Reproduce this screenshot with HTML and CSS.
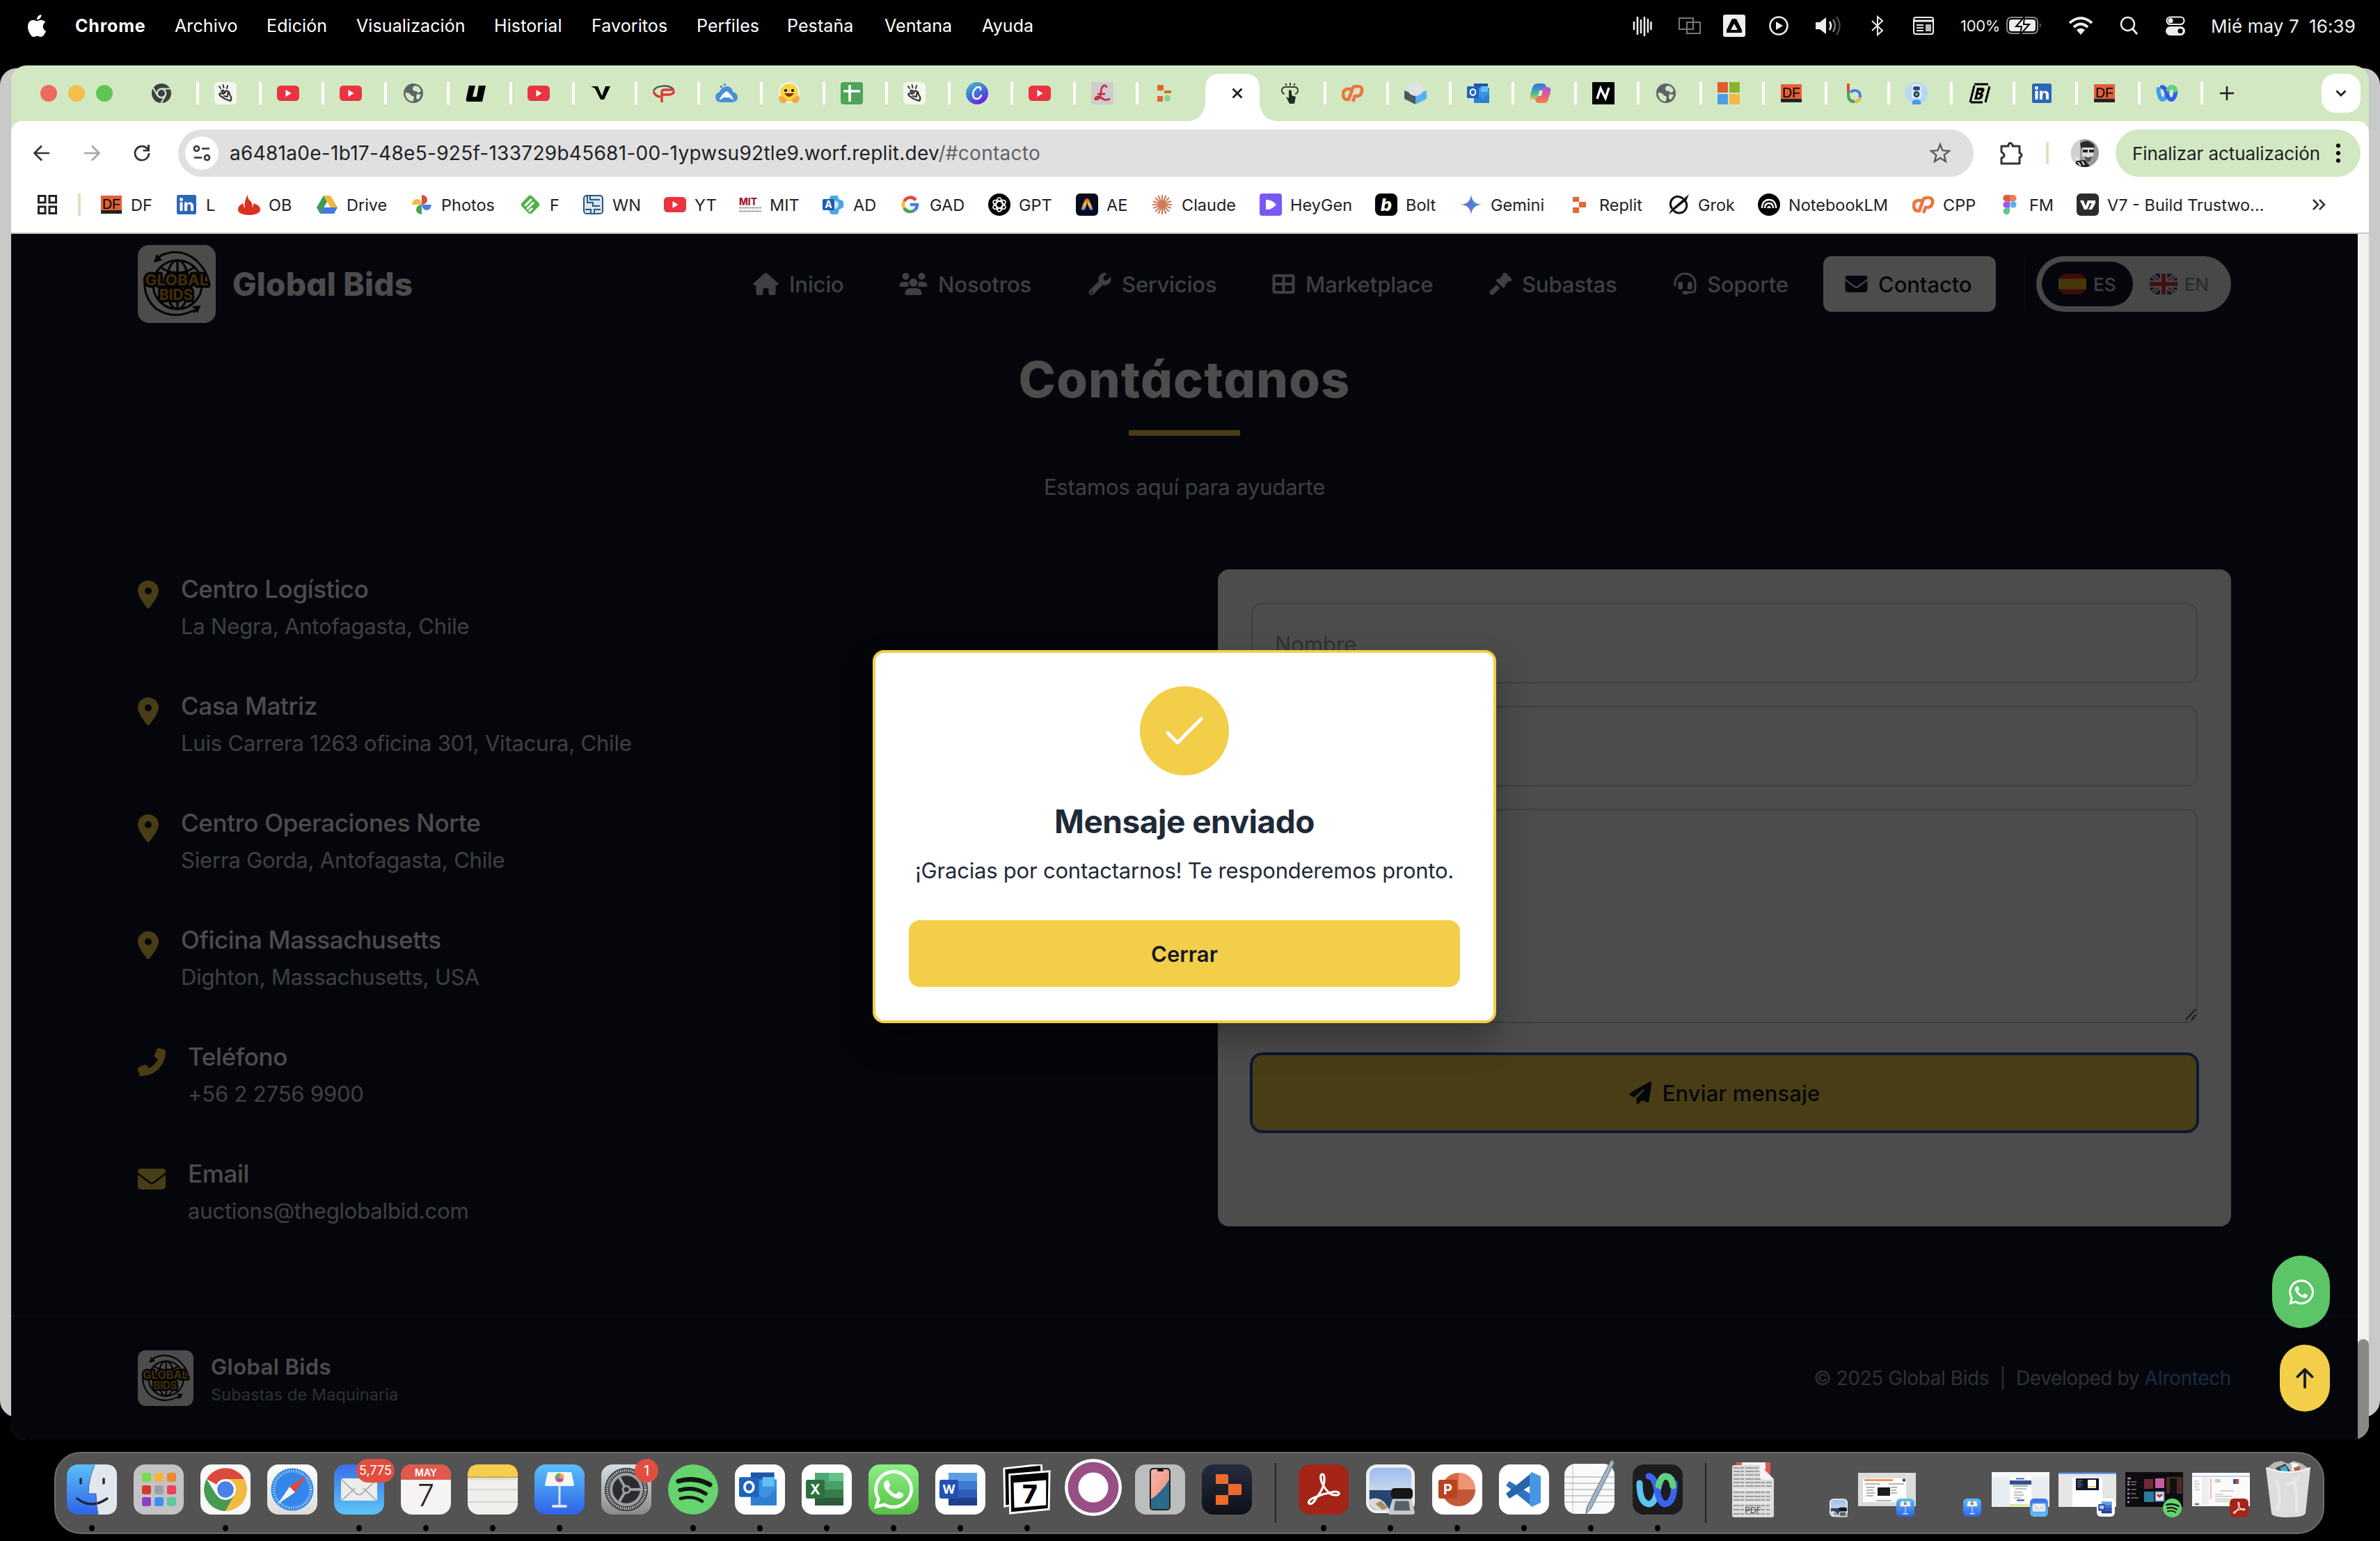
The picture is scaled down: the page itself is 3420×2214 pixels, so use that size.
FILE: index.html
```html
<!DOCTYPE html>
<html lang="es">
<head>
<meta charset="utf-8">
<title>Global Bids</title>
<link rel="stylesheet" href="styles.css">
</head>
<body>
<svg class="sprite" width="0" height="0">
  <defs>
    <linearGradient id="gBlue" x1="0" y1="0" x2="0" y2="1"><stop offset="0" stop-color="#5ac0f8"/><stop offset="1" stop-color="#2f62ea"/></linearGradient>
    <linearGradient id="gMail" x1="0" y1="0" x2="0" y2="1"><stop offset="0" stop-color="#3a6fe8"/><stop offset="1" stop-color="#5cc5f8"/></linearGradient>
    <linearGradient id="gPaper" x1="0" y1="0" x2="0" y2="1"><stop offset="0" stop-color="#ffffff"/><stop offset="1" stop-color="#dcdcd8"/></linearGradient>
    <linearGradient id="gGreen" x1="0" y1="0" x2="0" y2="1"><stop offset="0" stop-color="#8af084"/><stop offset="1" stop-color="#57bf45"/></linearGradient>
    <linearGradient id="gCanva" x1="0" y1="0" x2=".6" y2="1"><stop offset="0" stop-color="#4cc4c8"/><stop offset=".5" stop-color="#3f7ad8"/><stop offset="1" stop-color="#6a25e0"/></linearGradient>
    <linearGradient id="gGear" x1="0" y1="0" x2="0" y2="1"><stop offset="0" stop-color="#d4dfe6"/><stop offset="1" stop-color="#8c8a86"/></linearGradient>
    <linearGradient id="gSky" x1="0" y1="0" x2="0" y2="1"><stop offset="0" stop-color="#9dbcf0"/><stop offset="1" stop-color="#c9d6ee"/></linearGradient>
    <linearGradient id="gNavy" x1="0" y1="0" x2="0" y2="1"><stop offset="0" stop-color="#262c40"/><stop offset="1" stop-color="#0d1018"/></linearGradient>
    <linearGradient id="gGem" x1="0" y1="1" x2="1" y2="0"><stop offset="0" stop-color="#a868b8"/><stop offset=".5" stop-color="#4f7fd6"/><stop offset="1" stop-color="#4a8fe0"/></linearGradient>
    <linearGradient id="gAe" x1="0" y1="0" x2="0" y2="1"><stop offset="0" stop-color="#e84a2a"/><stop offset=".5" stop-color="#f0c040"/><stop offset="1" stop-color="#5a7cf0"/></linearGradient>
    <linearGradient id="gCop1" x1="0" y1="0" x2="0" y2="1"><stop offset="0" stop-color="#2f6fe0"/><stop offset=".6" stop-color="#3fb8a0"/><stop offset="1" stop-color="#e8c840"/></linearGradient>
    <linearGradient id="gCop2" x1="0" y1="0" x2="0" y2="1"><stop offset="0" stop-color="#9a5ae8"/><stop offset=".5" stop-color="#e8588c"/><stop offset="1" stop-color="#f0883c"/></linearGradient>
    <linearGradient id="gPhone" x1="0" y1="0" x2="1" y2="1"><stop offset="0" stop-color="#f4b8a4"/><stop offset="1" stop-color="#e88a80"/></linearGradient>
  </defs>

  <!-- favicons, 32 x 32 -->
  <symbol id="f-chrome" viewBox="0 0 32 32"><circle cx="16" cy="16" r="14" fill="#3c4043"/><circle cx="16" cy="16" r="7.4" fill="#d2e8c2"/><circle cx="16" cy="16" r="5" fill="#3c4043"/><path d="M16 9.500H29M10.400 19.500 4 8M21.500 19.500 15.500 30" stroke="#d2e8c2" stroke-width="2.200"/></symbol>
  <symbol id="f-hand" viewBox="0 0 32 32"><rect width="32" height="32" rx="6" fill="#f4f8f0"/><path d="M10 13q2-3 4 0l1 3q1-5 4-3 3 1 3 5l2 3q1 4-1 6l-8-3-6-4q-3-2-1-4l5 1M11 13l2 4M20 14l-1 5M14 20l5 1" fill="none" stroke="#333" stroke-width="2.200" stroke-linecap="round" stroke-linejoin="round"/><path d="m9 9-2-3M13.500 8l-1-4M18 9l1-4" stroke="#333" stroke-width="2" stroke-linecap="round"/></symbol>
  <symbol id="f-yt" viewBox="0 0 32 32"><rect y="5" width="32" height="22" rx="5.500" fill="#ea3340"/><path d="M12.500 11v10l8-5z" fill="#fff"/></symbol>
  <symbol id="f-globe" viewBox="0 0 32 32"><circle cx="16" cy="16" r="14" fill="#5f6368"/><path d="M19 5q6 1 8 7-2 4-5 3-1-3-4-2-3-1-3-4 0-3 4-4zM4.500 15q5 0 7 2 1 3 4 3 2 1 1 4l-1 4Q5 27 4.500 15zM21 17q4 1 6 0-1 5-4 8-3 0-3-4z" fill="#d2e8c2"/></symbol>
  <symbol id="f-u" viewBox="0 0 32 32"><path d="M6 5h9l-4 16h6l3-16h10l-5 23H4q-3 0-2-5z"/></symbol>
  <symbol id="f-v" viewBox="0 0 32 32"><path d="M1 6h10l6 14 5-14h7l-9 19h-5L7 9z"/></symbol>
  <symbol id="f-p" viewBox="0 0 32 32"><path d="M1 13C4 4 24 3 30 11" fill="none" stroke="#555" stroke-width="2.400"/><path d="M1 14q4 7 10 7M13 29V14q0-3 4-3h14M14 18h9q6 0 8-5" fill="none" stroke="#dd3b30" stroke-width="3.400"/></symbol>
  <symbol id="f-cloud" viewBox="0 0 32 32"><path d="M8 29q-8-1-8-8 0-5 6-7 2-7 10-8 8 0 9 8 7 2 7 8 0 6-8 7z" fill="#4b8fd4"/><path d="M6 26q1-7 10-13 8 5 10 13l-6-4h-8z" fill="#fff"/><g fill="#4b8fd4"><rect x="7" y="5" width="3" height="3"/><rect x="12" y="2" width="3" height="3"/></g></symbol>
  <symbol id="f-hug" viewBox="0 0 32 32"><circle cx="16" cy="15" r="14" fill="#f8d448" stroke="#fff" stroke-width="1.500"/><path d="M2 20q-2 6 3 10 6 1 8-4l-5-5zM30 20q2 6-3 10-6 1-8-4l5-5z" fill="#f5a93c"/><circle cx="11" cy="12" r="2"/><circle cx="21" cy="12" r="2"/><path d="M9 16q7 10 14 0z" fill="#8a2c20"/></symbol>
  <symbol id="f-sheet" viewBox="0 0 32 32"><rect width="32" height="32" rx="4" fill="#4ea35a"/><path d="M13 4v24M4 13h24" stroke="#fff" stroke-width="3.600"/></symbol>
  <symbol id="f-canva" viewBox="0 0 32 32"><circle cx="16" cy="16" r="16" fill="url(#gCanva)"/><path d="M21 11q1-4-3-4-6 1-8 9 0 8 5 8 5 0 7-5" fill="none" stroke="#fff" stroke-width="2.400" stroke-linecap="round"/></symbol>
  <symbol id="f-l" viewBox="0 0 32 32"><rect width="32" height="32" fill="#cdcdcd"/><path d="M22 8q0-4-4-3-4 2-4 11-1 9-7 9-3-1 1-4 5-1 10 4 5 1 9-1M9 17h11" fill="none" stroke="#cc2440" stroke-width="2.600"/></symbol>
  <symbol id="f-replit" viewBox="0 0 32 32"><path d="M6 5h9v7H6zM15 12h10v8H15zM6 20h9v8H6z" fill="#e06a32"/></symbol>
  <symbol id="f-replitdot" viewBox="0 0 32 32"><path d="M5 4h9v8H5zM15 12h10v4H15zM5 20h8v8H5z" fill="#e0682e"/><circle cx="19.500" cy="23" r="4.500" fill="#84d488"/></symbol>
  <symbol id="f-tap" viewBox="0 0 32 32"><path d="M8 17q-4-1-4-5t4-5h15q4 1 4 5t-4 5M16 5V1M11 5 9 2M21 5l2-3" fill="none" stroke="#39453a" stroke-width="2"/><path d="M14 12q3-2 4 1v6l6 2-2 10h-7l-5-10 4 2z" fill="#222d25"/></symbol>
  <symbol id="f-cpp" viewBox="0 0 32 32"><path d="M13 10H8q-6 1-6 7 0 8 6 8h2l6-17q1-2 6-2h2q6 1 5 7-1 6-6 7h-4l-3 8" fill="none" stroke="#ec7440" stroke-width="4.600"/></symbol>
  <symbol id="f-cube" viewBox="0 0 32 32"><path d="M0 12v12l16 8V18z" fill="#4b5a62"/><path d="M32 12v12l-16 8V18z" fill="#59aef0"/><ellipse cx="16" cy="10" rx="11" ry="10" fill="#e2e2e2"/></symbol>
  <symbol id="f-outlook" viewBox="0 0 32 32"><path d="M10 2h20v8H10z" fill="#1e56a4"/><path d="M14 8h18v22H10V12z" fill="#3c92e0"/><path d="M20 6h10v8H20z" fill="#64c0f4"/><path d="M10 30V18l12 6 10-8v14z" fill="#2f7fd0"/><rect y="6" width="17" height="17" rx="1.500" fill="#1d62bc"/><ellipse cx="8.500" cy="14.500" rx="3.800" ry="4.300" fill="none" stroke="#fff" stroke-width="2.200"/></symbol>
  <symbol id="f-copilot" viewBox="0 0 32 32"><path d="M11 2h8q4 0 5 5l1 4h-5q-3 0-4 4l-2 6q-1 4-5 4H6q-7 0-5-7l3-10q2-6 7-6z" fill="url(#gCop1)"/><path d="M21 30h-8q-4 0-5-5l1-2q3 0 4-4l3-8q1-4 4-4h5q7 0 5 7l-3 10q-1 6-6 6z" fill="url(#gCop2)"/><path d="m14 12h5l-2 8h-5z" fill="#d2e8c2"/></symbol>
  <symbol id="f-n" viewBox="0 0 32 32"><rect width="32" height="32"/><path d="M7 24 12 9l7 14 5-15" fill="none" stroke="#fff" stroke-width="3.400"/></symbol>
  <symbol id="f-ms" viewBox="0 0 32 32"><path d="M0 0h15v15H0z" fill="#e25a30"/><path d="M17 0h15v15H17z" fill="#88b433"/><path d="M0 17h15v15H0z" fill="#4aa0e8"/><path d="M17 17h15v15H17z" fill="#f4b942"/></symbol>
  <symbol id="f-df" viewBox="0 0 32 32"><rect x="1" y="3" width="30" height="26" fill="#e4603a"/><rect x="1" y="24" width="30" height="5" fill="#222"/><text x="16" y="21.500" text-anchor="middle" font-family="Liberation Sans" font-size="21" textLength="26" lengthAdjust="spacingAndGlyphs">DF</text></symbol>
  <symbol id="f-b" viewBox="0 0 32 32"><path d="M8 4v16q1 8 9 8t8-9q-1-7-8-7-4 0-6 3" fill="none" stroke="#4a80e8" stroke-width="4"/><path d="M8 2v12" stroke="#e04a3c" stroke-width="4"/><path d="M8 14v6q1 8 9 8" fill="none" stroke="#47a656" stroke-width="4"/><path d="M17 28q6 0 8-6" fill="none" stroke="#f2bb3c" stroke-width="4"/></symbol>
  <symbol id="f-bot" viewBox="0 0 32 32"><circle cx="16" cy="16" r="16" fill="#b8d8f8"/><rect x="9" y="3" width="14" height="11" rx="5" fill="#e8f2fc"/><rect x="11" y="6" width="10" height="6" rx="3" fill="#3c4866"/><path d="M9 14h14l-1 9H10z" fill="#f4f8fc"/><circle cx="16" cy="17.500" r="4.500" fill="#2b3a50"/><circle cx="16" cy="17.500" r="2" fill="#52c0a0"/><path d="M10 32v-5q6-4 12 0v5z" fill="#4a98f0"/></symbol>
  <symbol id="f-bb" viewBox="0 0 32 32"><path d="M9 3h20M3 29 9 5M4 29h17M31 6l-6 23" stroke="#000" stroke-width="3" fill="none"/><path d="M13 8h8q4 1 2 5-1 3-3 3 3 1 1 5-1 4-6 4H9z M16 12l-1 3h3q2-2 0-3zM14 18l-1 4h3q2-2 1-4z" fill-rule="evenodd"/></symbol>
  <symbol id="f-in" viewBox="0 0 32 32"><rect x="2" y="2" width="28" height="28" rx="2.500" fill="#2c66b8"/><path d="M6.500 12.500h4V25h-4zM13 12.500h4v2q4-4 8 0 1 2 1 4V25h-4v-6q0-4-3-4-2 1-2 4v6h-4z" fill="#fff"/><circle cx="8.500" cy="8.500" r="2.400" fill="#fff"/></symbol>
  <symbol id="f-webex" viewBox="0 0 32 32"><g fill="none" stroke-width="6" stroke-linecap="round"><path d="M3.500 10q1 14 6 15 4 0 6.500-9t6.500-9" stroke="#3f9ce8"/><path d="M9 7q4 0 6.500 9t6.500 9q5 0 6.500-12" stroke="#2f5ce8"/><path d="M18 11q2-4 5-4 4 0 5 5" stroke="#5fce86"/></g></symbol>
  <symbol id="f-flame" viewBox="0 0 32 32"><path d="M14 1q-1 6 4 10 4 5 2 9 3-2 2-6 10 3 10 9 0 7-16 8-16-1-16-8 0-6 8-9-1 4 2 7-2-8 4-20z" fill="#dc3020"/></symbol>
  <symbol id="f-drive" viewBox="0 0 32 32"><path d="M11 3h10l10 17H21z" fill="#f2b63a"/><path d="M11 3 1 20l5 9 10-17z" fill="#3f9a54"/><path d="M11 20h20l-5 9H6z" fill="#4478e4"/></symbol>
  <symbol id="f-photos" viewBox="0 0 32 32"><path d="M16 16V2q8 1 8 7t-8 7z" fill="#dd4a3c"/><path d="M16 16h14q-1 8-7 8t-7-8z" fill="#4a7ee8"/><path d="M16 16v14q-8-1-8-7t8-7z" fill="#46a356"/><path d="M16 16H2q1-8 7-8t7 8z" fill="#f2bb3c"/></symbol>
  <symbol id="f-feedly" viewBox="0 0 32 32"><rect x="5.500" y="5.500" width="21" height="21" rx="4" transform="rotate(45 16 16)" fill="#50b04c"/><path d="m9 17 8-8M12 21.500l8-8M15 25l3-3" stroke="#fff" stroke-width="3" stroke-linecap="round"/></symbol>
  <symbol id="f-wn" viewBox="0 0 32 32"><rect x="3" y="3" width="27" height="26" rx="4" fill="#d8e6f2" stroke="#2d567c" stroke-width="2"/><path d="M8 4v9h8v5h10M12 4v5h14M5 23h8v5M18 28v-5h9" fill="none" stroke="#2d567c" stroke-width="2"/></symbol>
  <symbol id="f-mit" viewBox="0 0 32 32"><text x="0" y="17" font-family="Inter" font-weight="800" font-size="14" textLength="26" lengthAdjust="spacingAndGlyphs" fill="#9c2030">MIT</text><path d="M0 20.500h32M0 25.500h32" stroke="#999" stroke-width="2" stroke-dasharray="3 .6"/></symbol>
  <symbol id="f-ad" viewBox="0 0 32 32"><path d="M12 3h10l1 5 7 3v9l-6 3-2 7H12l-3-6-3-8 3-7z" fill="#4aa8e4"/><circle cx="17" cy="16" r="6" fill="#cfe4f4"/><rect y="8" width="17" height="16" rx="2" fill="#1f5cb0"/><text x="8.500" y="21" text-anchor="middle" font-family="Inter" font-weight="700" font-size="14" fill="#fff">A</text></symbol>
  <symbol id="f-g" viewBox="0 0 32 32"><g fill="none" stroke-width="4.600"><path d="M24 9.500A10 10 0 0 0 7.300 11" stroke="#dd4a3c"/><path d="M7.300 11a10 10 0 0 0 0 10" stroke="#f2bb3c"/><path d="M7.300 21A10 10 0 0 0 22 24" stroke="#46a356"/><path d="M22 24q4-3 4-8H16" stroke="#4a7ee8"/></g></symbol>
  <symbol id="f-gpt" viewBox="0 0 32 32"><circle cx="16" cy="16" r="16"/><g fill="none" stroke="#fff" stroke-width="1.700"><ellipse cx="16" cy="16" rx="4.500" ry="10"/><ellipse cx="16" cy="16" rx="4.500" ry="10" transform="rotate(60 16 16)"/><ellipse cx="16" cy="16" rx="4.500" ry="10" transform="rotate(120 16 16)"/></g></symbol>
  <symbol id="f-ae" viewBox="0 0 32 32"><rect width="32" height="32" rx="6" fill="#060c1c"/><path d="M10 24q-3 0-2-3l5-12q1-2 3-2t3 2l5 12q1 3-2 3-2 0-3-3l-3-8-2 8q-1 3-4 3z" fill="url(#gAe)"/></symbol>
  <symbol id="f-claude" viewBox="0 0 32 32"><path d="M16 2v28M2 16h28M6 6l20 20M26 6 6 26M10.500 3l11 26M21.500 3l-11 26M3 11l26 10M3 21l26-10" stroke="#cf7c5c" stroke-width="2.200"/></symbol>
  <symbol id="f-heygen" viewBox="0 0 32 32"><rect width="32" height="32" rx="4" fill="#7858f4"/><path d="M9 9q8-1 15 7-7 8-15 7z" fill="#fff"/></symbol>
  <symbol id="f-bolt" viewBox="0 0 32 32"><rect width="32" height="32" rx="8"/><text x="16" y="25" text-anchor="middle" font-family="Inter" font-style="italic" font-weight="800" font-size="25" fill="#fff">b</text></symbol>
  <symbol id="f-gemini" viewBox="0 0 32 32"><path d="M16 1q1 14 15 15-14 1-15 15-1-14-15-15Q15 15 16 1z" fill="url(#gGem)"/></symbol>
  <symbol id="f-grok" viewBox="0 0 32 32"><path d="M23 8A10.500 10.500 0 0 0 7 22M9 24.500A10.500 10.500 0 0 0 25 10" fill="none" stroke="#111" stroke-width="3"/><path d="M31 1q-3 7-3 8L2 30q3-7 7-10z" fill="#111"/></symbol>
  <symbol id="f-nlm" viewBox="0 0 32 32"><circle cx="16" cy="16" r="16"/><g fill="none" stroke="#fff" stroke-width="2.400"><path d="M6 21v-3q2-9 10-9t10 9v3M10 21q0-7 6-7t6 7M14 21q2-4 4 0"/></g></symbol>
  <symbol id="f-fm" viewBox="0 0 32 32"><path d="M16 2h-5a4.700 4.700 0 0 0 0 9.400h5z" fill="#e25a38"/><path d="M16 2h5a4.700 4.700 0 0 1 0 9.400h-5z" fill="#ee7a66"/><path d="M16 11.400h-5a4.700 4.700 0 0 0 0 9.400h5z" fill="#9a58f0"/><circle cx="21" cy="16" r="4.700" fill="#56b4f0"/><path d="M16 20.800h-5a4.700 4.700 0 1 0 5 5z" fill="#5cc88a"/></symbol>
  <symbol id="f-v7" viewBox="0 0 32 32"><rect width="32" height="32" rx="6" fill="#2c2c2e"/><path d="M5 10h5l3 8 3-8h11v4l-5 9h-5l5-9h-3l-4 9h-4z" fill="#fff"/></symbol>

  <!-- dock icons, 72 x 72 -->
  <symbol id="d-finder" viewBox="0 0 72 72"><rect width="72" height="72" rx="16" fill="url(#gBlue)"/><path d="M40 0h16q16 0 16 16v40q0 16-16 16H45q-3-14-3-30H31q0-24 9-42z" fill="#e2e6ef"/><path d="M20 21v6M53 21v6M15 49q20 16 43 0" fill="none" stroke="#1c2836" stroke-width="3.400" stroke-linecap="round"/><path d="M40 1q-9 20-9 41h11q0 16 3 30" fill="none" stroke="#38618e" stroke-width="1"/></symbol>
  <symbol id="d-launch" viewBox="0 0 72 72"><rect width="72" height="72" rx="16" fill="#c3c3c5"/><g><rect x="12" y="12" width="13" height="13" rx="3" fill="#76dc50"/><rect x="30" y="12" width="13" height="13" rx="3" fill="#f4b73c"/><rect x="48" y="12" width="13" height="13" rx="3" fill="#ec8a30"/><rect x="12" y="30" width="13" height="13" rx="3" fill="#d8382c"/><rect x="30" y="30" width="13" height="13" rx="3" fill="#9aa2a6"/><rect x="48" y="30" width="13" height="13" rx="3" fill="#ee4258"/><rect x="12" y="47" width="13" height="13" rx="3" fill="#9040c8"/><rect x="30" y="47" width="13" height="13" rx="3" fill="#3f90f4"/><rect x="48" y="47" width="13" height="13" rx="3" fill="#5cc89c"/></g></symbol>
  <symbol id="d-chrome" viewBox="0 0 72 72"><rect width="72" height="72" rx="16" fill="#f8f8f8"/><path d="M36 36 9 21a31 31 0 0 1 54 0H36z" fill="#dc4a3c"/><path d="M36 36 22.500 43.500 9 21a31 31 0 0 0 27 46l13-23z" fill="#459c50"/><path d="M36 36V21h27a31 31 0 0 1-27 46l13-23z" fill="#f2bb40"/><circle cx="36" cy="36" r="15" fill="#fff"/><circle cx="36" cy="36" r="11.800" fill="#4a80e8"/></symbol>
  <symbol id="d-safari" viewBox="0 0 72 72"><rect width="72" height="72" rx="16" fill="url(#gPaper)"/><circle cx="36" cy="36" r="30.500" fill="#3487ea"/><circle cx="36" cy="36" r="26.500" fill="none" stroke="#dcecfc" stroke-width="4" stroke-dasharray="1 2.500"/><path d="m57 15-17 25-8-8z" fill="#e04a3a"/><path d="m15 57 17-25 8 8z" fill="#f4f4f4"/></symbol>
  <symbol id="d-mail" viewBox="0 0 72 72"><rect width="72" height="72" rx="16" fill="url(#gMail)"/><rect x="10" y="20" width="52" height="32" rx="3.500" fill="#ececec"/><path d="m11 22 21 20q4 3 8 0l21-20M12 51l18-17M60 51 42 34" fill="none" stroke="#a2a2a2" stroke-width="1.600"/></symbol>
  <symbol id="d-cal" viewBox="0 0 72 72"><rect width="72" height="72" rx="16" fill="#f5f4f2"/><path d="M0 22v-6Q0 0 16 0h40q16 0 16 16v6z" fill="#e0594e"/><text x="36" y="17" text-anchor="middle" font-family="Inter" font-weight="600" font-size="14" fill="#fff">MAY</text><text x="36" y="60" text-anchor="middle" font-family="Inter" font-weight="300" font-size="43" fill="#222">7</text></symbol>
  <symbol id="d-notes" viewBox="0 0 72 72"><rect width="72" height="72" rx="16" fill="#f0efec"/><path d="M0 18v-2Q0 0 16 0h40q16 0 16 16v2z" fill="#f6cd4c"/><path d="M0 18.500h72" stroke="#a89860" stroke-width="1.500"/><path d="M2 21.500h68" stroke="#aaa" stroke-width="1.400" stroke-dasharray="1 2"/><path d="M0 36h72M0 54h72" stroke="#cbcbcb" stroke-width="1.600"/></symbol>
  <symbol id="d-key" viewBox="0 0 72 72"><rect width="72" height="72" rx="16" fill="url(#gBlue)"/><path d="M19 11h34l4 18q0 2-3 2H18q-3 0-3-2z" fill="#f6f6f6"/><circle cx="36" cy="19" r="6.500" fill="#e8a33c"/><path d="M36 19v-6.500a6.500 6.500 0 0 0-6 8z" fill="#55b85a"/><path d="M36 19l6 3a6.500 6.500 0 0 1-12-1z" fill="#c24cb8"/><path d="M36 31v28" stroke="#dfe4ec" stroke-width="3"/><rect x="25" y="58" width="22" height="4" rx="2" fill="#dfe4ec"/></symbol>
  <symbol id="d-gear" viewBox="0 0 72 72"><rect width="72" height="72" rx="16" fill="url(#gGear)"/><circle cx="36" cy="36" r="31" fill="#2b2c2e"/><circle cx="36" cy="36" r="27.500" fill="none" stroke="#b6babd" stroke-width="4" stroke-dasharray="1.800 1.200"/><circle cx="36" cy="36" r="22" fill="none" stroke="#9c9fa2" stroke-width="4.500"/><path d="M36 36h22M36 36 25 17M36 36 25 55" stroke="#9c9fa2" stroke-width="4"/><circle cx="36" cy="36" r="5" fill="#2b2c2e" stroke="#9c9fa2" stroke-width="3"/></symbol>
  <symbol id="d-spotify" viewBox="0 0 72 72"><circle cx="36" cy="36" r="36" fill="#66d46e"/><g fill="none" stroke="#10180f" stroke-linecap="round"><path d="M15 24q24-7 45 5" stroke-width="7"/><path d="M17 37q20-6 37 5" stroke-width="5.600"/><path d="M18 49q17-5 31 4" stroke-width="4.600"/></g></symbol>
  <symbol id="d-outlook" viewBox="0 0 72 72"><rect width="72" height="72" rx="16" fill="#fff"/><use href="#f-outlook" x="6" y="8" width="54" height="54"/></symbol>
  <symbol id="d-excel" viewBox="0 0 72 72"><rect width="72" height="72" rx="16" fill="#fff"/><path d="M19 12h41v12H19z" fill="#4fa873"/><path d="M39 12h21v12H39z" fill="#66c28c"/><path d="M19 24h41v12H19z" fill="#47a068"/><path d="M19 36h41v12H19z" fill="#367c49"/><path d="M19 48h41v11H19z" fill="#2c5c3a"/><rect x="6" y="22" width="27" height="27" rx="3" fill="#2c703f"/><text x="19.500" y="43" text-anchor="middle" font-family="Inter" font-weight="700" font-size="20" fill="#fff">X</text></symbol>
  <symbol id="i-wa" viewBox="0 0 448 512"><path d="M380.900 97.100C339 55.100 283.200 32 223.900 32c-122.400 0-222 99.600-222 222 0 39.100 10.200 77.300 29.600 111L0 480l117.700-30.900c32.400 17.700 68.900 27 106.100 27h.1c122.300 0 224.100-99.600 224.100-222 0-59.300-25.200-115-67.100-157zm-157 341.600c-33.200 0-65.700-8.900-94-25.700l-6.700-4-69.800 18.300L72 359.200l-4.400-7c-18.500-29.400-28.200-63.300-28.200-98.200 0-101.700 82.800-184.500 184.600-184.500 49.300 0 95.600 19.200 130.400 54.100 34.800 34.900 56.200 81.200 56.100 130.500 0 101.800-84.900 184.600-186.600 184.600zm101.200-138.200c-5.500-2.800-32.800-16.200-37.900-18-5.100-1.900-8.800-2.800-12.500 2.800-3.700 5.600-14.300 18-17.600 21.800-3.200 3.700-6.500 4.200-12 1.400-32.600-16.300-54-29.100-75.500-66-5.700-9.800 5.700-9.100 16.300-30.300 1.800-3.700.9-6.900-.5-9.700-1.400-2.800-12.500-30.100-17.100-41.200-4.500-10.800-9.100-9.300-12.500-9.500-3.200-.2-6.900-.2-10.600-.2-3.700 0-9.700 1.400-14.800 6.900-5.100 5.600-19.400 19-19.400 46.300 0 27.300 19.900 53.700 22.600 57.400 2.800 3.700 39.100 59.700 94.800 83.800 35.200 15.200 49 16.500 66.600 13.900 10.700-1.600 32.800-13.400 37.400-26.400 4.600-13 4.600-24.100 3.200-26.400-1.300-2.500-5-3.900-10.500-6.600z" fill="#fff"/></symbol>
  <symbol id="d-wa" viewBox="0 0 72 72"><rect width="72" height="72" rx="16" fill="url(#gGreen)"/><use href="#i-wa" x="8" y="4" width="56" height="64"/></symbol>
  <symbol id="d-word" viewBox="0 0 72 72"><rect width="72" height="72" rx="16" fill="#fff"/><path d="M19 12h41v12H19z" fill="#5ba0e6"/><path d="M19 24h41v12H19z" fill="#4079d0"/><path d="M19 36h41v12H19z" fill="#2d5cb8"/><path d="M19 48h41v11H19z" fill="#1f3f8c"/><rect x="6" y="22" width="27" height="27" rx="3" fill="#2450b0"/><text x="19.500" y="42" text-anchor="middle" font-family="Inter" font-weight="700" font-size="18" fill="#fff">W</text></symbol>
  <symbol id="d-seven" viewBox="0 0 72 74"><path d="M3 6 58 0l2 50L4 62z" fill="#000" stroke="#fff" stroke-width="3"/><path d="M11 15 70 10l-1 56-57 6z" fill="#000" stroke="#fff" stroke-width="3"/><path d="m17 27 48-4v37l-47 4z" fill="#fff"/><text x="41" y="58" text-anchor="middle" font-family="Inter" font-weight="800" font-size="38">7</text></symbol>
  <symbol id="d-ring" viewBox="0 0 82 82"><circle cx="41" cy="41" r="41" fill="#fff"/><circle cx="41" cy="41" r="29" fill="none" stroke="#984f86" stroke-width="15"/></symbol>
  <symbol id="d-phone" viewBox="0 0 72 72"><rect width="72" height="72" rx="16" fill="#bcbdbd"/><rect x="21" y="5" width="30" height="61" rx="5" fill="#222"/><rect x="23" y="7" width="26" height="57" rx="4" fill="url(#gPhone)"/><path d="M23 50Q38 40 49 22v38q0 4-4 4H27q-4 0-4-4z" fill="#2b6a8a"/><rect x="32" y="7" width="9" height="3" rx="1.500"/></symbol>
  <symbol id="d-replit" viewBox="0 0 72 72"><rect width="72" height="72" rx="16" fill="url(#gNavy)"/><path d="M20 14h16q2 0 2 2v12H20zM38 28h17q2 0 2 2v12q0 2-2 2H38zM20 44h18v12q0 2-2 2H20z" fill="#ee6a2c"/></symbol>
  <symbol id="d-acro" viewBox="0 0 72 72"><rect width="72" height="72" rx="16" fill="#a42418"/><path d="M15 56q-3-5 12-10 11-14 10-26 0-6-3-6-4 1-1 11 5 12 14 18 12 3 11-2-3-4-14 0-13 2-18 6-6 12-11 9z" fill="none" stroke="#fff" stroke-width="3.200" stroke-linejoin="round"/></symbol>
  <symbol id="d-preview" viewBox="0 0 72 74"><rect width="72" height="72" rx="16" fill="#efefef"/><path d="M5 39V17Q5 5 17 5h38q12 0 12 12v22z" fill="url(#gSky)"/><path d="M5 38h62v17q0 12-12 12H17Q5 67 5 55z" fill="#28456e"/><path d="M5 52q12-6 22 4l8 11H17Q5 66 5 55z" fill="#d8dcdc"/><path d="M14 58l8-4 10 10-8 3z" fill="#a88a5c"/><rect x="37" y="35" width="32" height="16" rx="5" fill="#161616"/><path d="M39 51h28l5 20q0 3-4 3H36q-4 0-3-3z" fill="#c5cbd0"/><path d="M43 54h20l2 14H41z" fill="#5a6068"/></symbol>
  <symbol id="d-ppt" viewBox="0 0 72 72"><rect width="72" height="72" rx="16" fill="#fff"/><circle cx="38" cy="36" r="24" fill="#d96a48"/><path d="M38 12a24 24 0 0 1 24 24H38z" fill="#ee9474"/><path d="M62 36a24 24 0 0 1-48 0z" fill="#c2583a"/><rect x="9" y="22" width="27" height="27" rx="3" fill="#b8431f"/><text x="22.500" y="43" text-anchor="middle" font-family="Inter" font-weight="700" font-size="20" fill="#fff">P</text></symbol>
  <symbol id="d-code" viewBox="0 0 72 72"><rect width="72" height="72" rx="16" fill="#fff"/><path d="M47 60 10 30l5-6 40 24z" fill="#2f74c4"/><path d="M47 12 10 42l5 7 40-25z" fill="#2565ac"/><path d="m47 11 13 6v38l-13 6-3-3V14z" fill="#4597e4"/></symbol>
  <symbol id="d-text" viewBox="0 0 76 80"><rect y="7" width="72" height="72" rx="16" fill="#fafafa"/><path d="M0 26h72M0 35h72M0 44h72M0 53h72M0 62h72" stroke="#bdbdbd" stroke-width="1.400"/><path d="M12 8v70" stroke="#eaa" stroke-width="1"/><path d="M67 2q5 0 4 5L38 72l-7 7 1-9z" fill="#9fb4c6" stroke="#5c6b78" stroke-width="1"/></symbol>
  <symbol id="d-webex" viewBox="0 0 72 72"><rect width="72" height="72" rx="16" fill="#1c1c1e"/><path d="M10 27q0 28 13 30 9 0 13-20t11-20q8 0 10 8" fill="none" stroke="#5cc4f0" stroke-width="9" stroke-linecap="round"/><path d="M23 17q8 0 12 20t12 20q13-2 13-30" fill="none" stroke="#3c62f0" stroke-width="9" stroke-linecap="round"/><path d="M37 30q4-13 10-13 9 0 11 14" fill="none" stroke="#5fd07c" stroke-width="9" stroke-linecap="round"/></symbol>
  <symbol id="d-pdf" viewBox="0 0 62 80"><path d="M6 0h49v22H6z" fill="#d95a4e"/><path d="M14 0h34v10H14z" fill="#f4f4f4"/><path d="M3 4h37l20 20v52q0 3-3 3H3q-3 0-3-3V7q0-3 3-3z" fill="#dcdcdc"/><path d="M2 8h36M2 13h37M2 18h38M2 24h55M2 29h55M2 34h55M2 43h52M2 49h52M2 54h52M2 62h52M2 68h52M2 74h52" stroke="#9c9c9c" stroke-width="1.800" stroke-dasharray="9 1 5 2 12 1"/><path d="M2 39h56M2 58h56" stroke="#eee" stroke-width="2"/><path d="M40 4v17q0 4 4 4h16z" fill="#f3f3f3"/><text x="30" y="73" text-anchor="middle" font-family="Inter" font-size="12" fill="#444">PDF</text></symbol>
  <symbol id="d-trash" viewBox="0 0 64 84"><path d="M2 12 12 4l10-2 10 4 8-4 12 4 10 7-6 12H6z" fill="#b9b9b9"/><path d="m14 12 14-6 8 12H18z" fill="#444"/><path d="m36 4 10 2 6 10H38z" fill="#f6f6f6"/><path d="m20 12 9-3 3 8h-9z" fill="#38b0d8"/><path d="m40 12 8-3 3 7-9 3z" fill="#b4603c"/><path d="M0 12q32 12 64 0l-7 65q-2 6-25 6T8 77z" fill="#dedddb"/><path d="M0 12q32 12 64 0" fill="none" stroke="#f8f8f8" stroke-width="2"/><path d="M14 30q10 20 2 44M40 26q6 24 4 50M28 36q16-2 20-12" fill="none" stroke="#e8e8e6" stroke-width="4"/></symbol>

  <!-- site icons -->
  <symbol id="i-pin" viewBox="0 0 384 512"><path d="M215.700 499.200C267 435 384 279.400 384 192C384 86 298 0 192 0S0 86 0 192c0 87.400 117 243 168.300 307.200c12.300 15.300 35.100 15.300 47.400 0zM192 128a64 64 0 1 1 0 128 64 64 0 1 1 0-128z"/></symbol>
  <symbol id="i-tel" viewBox="0 0 512 512"><path transform="matrix(-1 0 0 1 512 0)" d="M164.900 24.600c-7.700-18.600-28-28.500-47.400-23.200l-88 24C12.100 30.200 0 46 0 64C0 311.400 200.600 512 448 512c18 0 33.800-12.100 38.600-29.500l24-88c5.300-19.400-4.600-39.700-23.200-47.400l-96-40c-16.300-6.800-35.200-2.100-46.300 11.600L304.700 368C234.300 334.700 177.300 277.700 144 207.300L193.300 167c13.700-11.200 18.400-30 11.600-46.300l-40-96z"/></symbol>
  <symbol id="i-env" viewBox="0 0 512 512"><path d="M48 64C21.500 64 0 85.500 0 112c0 15.100 7.100 29.300 19.200 38.400L236.800 313.600c11.400 8.500 27 8.500 38.400 0L492.800 150.400c12.100-9.100 19.200-23.300 19.200-38.400c0-26.500-21.500-48-48-48L48 64zM0 176L0 384c0 35.300 28.700 64 64 64l384 0c35.300 0 64-28.700 64-64l0-208L294.400 339.200c-22.800 17.100-54 17.100-76.800 0L0 176z"/></symbol>
  <symbol id="i-plane" viewBox="0 0 512 512"><path d="M498.100 5.600c10.100 7 15.400 19.100 13.500 31.200l-64 416c-1.500 9.700-7.400 18.200-16 23s-18.900 5.400-28 1.600L284 427.700l-68.500 74.100c-8.900 9.700-22.900 12.900-35.200 8.100S160 493.200 160 480V396.400c0-4 1.500-7.800 4.200-10.700L331.800 202.800c5.800-6.300 5.600-16-.4-22s-15.700-6.400-22-.7L106 360.800 17.700 316.600C7.100 311.300 .3 300.700 0 288.900s5.900-22.800 16.100-28.700l448-256c10.700-6.100 23.900-5.500 34 1.400z"/></symbol>
  <symbol id="i-home" viewBox="0 0 576 512"><path d="M575.800 255.500c0 18-15 32.100-32 32.100l-32 0 .7 160.200V472c0 22.100-17.900 40-40 40H392c-22.100 0-40-17.900-40-40V384c0-17.700-14.300-32-32-32H256c-17.700 0-32 14.300-32 32v88c0 22.100-17.900 40-40 40H104c-22.100 0-40-17.900-40-40V287.600H32c-18 0-32-14-32-32.100c0-9 3-17 10-24L266.400 8c7-7 15-8 22-8s15 2 21 7L564.800 231.500c8 7 12 15 11 24z"/></symbol>
  <symbol id="i-users" viewBox="0 0 40 32"><circle cx="9" cy="5" r="5"/><circle cx="32" cy="5" r="5"/><circle cx="20" cy="14" r="6"/><path d="M0 19q0-6 6-6h5q2 0 2 1-1 4 1 6H1q-1 0-1-1zM40 19q0-6-6-6h-5q-2 0-2 1 1 4-1 6h13q1 0 1-1zM8 30q0-8 8-8h8q8 0 8 8 0 2-2 2H10q-2 0-2-2z"/></symbol>
  <symbol id="i-wrench" viewBox="0 0 512 512"><path d="M507.730 109.100c-2.240-9.030-13.540-12.090-20.120-5.510l-74.360 74.360-67.880-11.310-11.310-67.880 74.360-74.360c6.620-6.620 3.430-17.900-5.660-20.160-47.380-11.740-99.550.91-136.580 37.930-39.640 39.640-50.550 97.100-34.050 147.200L18.740 402.760c-24.990 24.990-24.990 65.510 0 90.500 24.990 24.990 65.510 24.990 90.500 0l213.210-213.210c50.120 16.710 107.470 5.680 147.370-34.220 37.070-37.070 49.700-89.320 37.910-136.730zM64 472c-13.250 0-24-10.750-24-24 0-13.260 10.750-24 24-24s24 10.740 24 24c0 13.250-10.750 24-24 24z"/></symbol>
  <symbol id="i-table" viewBox="0 0 32 32"><path fill-rule="evenodd" d="M4 2h24q4 0 4 4v20q0 4-4 4H4q-4 0-4-4V6q0-4 4-4zM4 6v8h10V6zM18 6v8h10V6zM4 18v8h10v-8zM18 18v8h10v-8z"/></symbol>
  <symbol id="i-gavel" viewBox="0 0 32 32"><g transform="rotate(45 16 16)"><rect x="8" y="-1" width="16" height="5" rx="2.500"/><rect x="10" y="3" width="12" height="10"/><rect x="8" y="12" width="16" height="5" rx="2.500"/></g><path d="m11 17 5 5L6.500 31q-2 1.500-4 0l-1-1q-1.500-2 0-4z"/></symbol>
  <symbol id="i-headset" viewBox="0 0 32 32"><path d="M1.500 19v-4a14.500 14 0 0 1 29 0v8q0 5-5 5h-7" fill="none" stroke="currentColor" stroke-width="3"/><rect x="6" y="13" width="6.500" height="11" rx="2.500"/><rect x="19.500" y="13" width="6.500" height="11" rx="2.500"/><rect x="12" y="26" width="9" height="5" rx="2.500"/></symbol>
  <symbol id="i-es" viewBox="0 0 40 30"><rect width="40" height="30" rx="12" fill="#c32d2a"/><path d="M0 7.500h40v15H0z" fill="#f0b92c"/></symbol>
  <symbol id="i-en" viewBox="0 0 40 30"><clipPath id="cEn"><rect width="40" height="30" rx="12"/></clipPath><g clip-path="url(#cEn)"><path d="M0 0h40v30H0z" fill="#3350a0"/><path d="m0 0 40 30M40 0 0 30" stroke="#fff" stroke-width="6"/><path d="m0 0 40 30M40 0 0 30" stroke="#d03844" stroke-width="2"/><path d="M20 0v30M0 15h40" stroke="#fff" stroke-width="10"/><path d="M20 0v30M0 15h40" stroke="#d03844" stroke-width="6"/></g></symbol>
  <symbol id="i-logo" viewBox="0 0 112 112">
    <rect width="112" height="112" rx="16" fill="#fff"/>
    <g fill="none" stroke="#0c0c0c" stroke-width="3.200"><circle cx="57" cy="57" r="35"/><ellipse cx="57" cy="57" rx="16" ry="35"/><path d="M57 22v70M34 33q23 14 46 0M34 82q23-14 46 0"/><path d="M31 16Q60 2 84 22 104 42 102 60M10 50Q8 76 27 92 52 108 80 94" stroke-width="3"/></g>
    <path d="m23 25 4-12 8 9zM90 87l-12 1 8 10z" fill="#0c0c0c"/><path d="m24 24 10-9M89 88l-9 9" stroke="#0c0c0c" stroke-width="3"/>
    <g font-family="Inter" font-weight="700" fill="#d99c1c" stroke="#0c0c0c" stroke-width="7" stroke-linejoin="round" paint-order="stroke"><text x="56" y="58" text-anchor="middle" font-size="22" textLength="91" lengthAdjust="spacingAndGlyphs">GLOBAL</text><text x="55" y="79" text-anchor="middle" font-size="22" textLength="48" lengthAdjust="spacingAndGlyphs">BIDS</text></g>
  </symbol>
</svg>

<header class="menubar">
  <nav class="menus">
    <svg class="apple" viewBox="0 0 24 24"><path fill="#fff" d="M12.152 6.896c-.948 0-2.415-1.078-3.960-1.040-2.040.027-3.910 1.183-4.961 3.014-2.117 3.675-.546 9.103 1.519 12.090 1.013 1.454 2.208 3.090 3.792 3.039 1.520-.065 2.090-.987 3.935-.987 1.831 0 2.350.987 3.960.948 1.637-.026 2.676-1.480 3.676-2.948 1.156-1.688 1.636-3.325 1.662-3.415-.039-.013-3.182-1.221-3.220-4.857-.026-3.040 2.480-4.494 2.597-4.559-1.429-2.090-3.623-2.324-4.390-2.376-2-.156-3.675 1.090-4.610 1.090zM15.530 3.830c.843-1.012 1.400-2.427 1.245-3.830-1.207.052-2.662.805-3.532 1.818-.78.896-1.454 2.338-1.273 3.714 1.338.104 2.715-.688 3.559-1.701"/></svg>
    <b>Chrome</b><span>Archivo</span><span>Edición</span><span>Visualización</span><span>Historial</span><span>Favoritos</span><span>Perfiles</span><span>Pestaña</span><span>Ventana</span><span>Ayuda</span>
  </nav>
  <div class="status">
    <svg width="28" height="32" viewBox="0 0 28 32"><path d="M2 11v10M7 4v24M12 8v18M17 4v26M22 7v18M26.500 11v10" stroke="#eee" stroke-width="2.600" stroke-linecap="round"/></svg>
    <svg width="32" height="28" viewBox="0 0 32 28"><path d="M1 3h20v16H1zM12 9h19v16H12z" fill="none" stroke="#777" stroke-width="2"/></svg>
    <svg width="32" height="32" viewBox="0 0 32 32"><rect width="32" height="32" rx="3" fill="#eee"/><path d="M13 6h6l8 16v4H5v-4z"/><path d="m16 13 5 9H11z" fill="#eee"/></svg>
    <svg width="28" height="28" viewBox="0 0 28 28"><circle cx="14" cy="14" r="12.500" fill="none" stroke="#eee" stroke-width="2.600"/><path d="M10 8v12l10-6z" fill="#eee"/></svg>
    <svg width="40" height="30" viewBox="0 0 40 30"><path d="M1 10h6l9-7v24l-9-7H1z" fill="#eee"/><path d="M21 9q4 6 0 12" fill="none" stroke="#eee" stroke-width="2.600"/><path d="M26 6q6 9 0 18" fill="none" stroke="#777" stroke-width="2.600"/><path d="M31 2q9 13 0 26" fill="none" stroke="#444" stroke-width="2.600"/></svg>
    <svg width="20" height="30" viewBox="0 0 20 30"><path d="m2 8 15 14-7 6V2l7 6L2 22" fill="none" stroke="#eee" stroke-width="2"/></svg>
    <svg width="30" height="26" viewBox="0 0 30 26"><rect x="1" y="1" width="28" height="24" rx="3" fill="none" stroke="#eee" stroke-width="2"/><path d="M1 6h28" stroke="#eee" stroke-width="3"/><path d="M5 12h10M5 16h10M5 20h10" stroke="#eee" stroke-width="2.200"/><path d="M18 11h8v10h-8z" fill="#bbb"/></svg>
    <small>100%</small>
    <svg width="52" height="28" viewBox="0 0 52 28"><rect x="1" y="2" width="44" height="23" rx="6" fill="none" stroke="#888" stroke-width="2"/><rect x="4" y="5" width="38" height="17" rx="4" fill="#eee"/><path d="M48 10q3 3 0 7z" fill="#888"/><path d="M26 1 14 15h8l-2 12 13-15h-8z" fill="#eee" stroke="#000" stroke-width="2"/></svg>
    <svg width="36" height="28" viewBox="0 0 36 28"><path d="M2 10q16-14 32 0M8 16q10-9 20 0" fill="none" stroke="#eee" stroke-width="4"/><path d="m12 20 6 7 6-7q-6-5-12 0z" fill="#eee"/></svg>
    <svg width="28" height="28" viewBox="0 0 28 28"><circle cx="11.500" cy="11.500" r="9.500" fill="none" stroke="#eee" stroke-width="2.400"/><path d="m18 18 7 8" stroke="#eee" stroke-width="3"/></svg>
    <svg width="28" height="28" viewBox="0 0 28 28"><rect x="1.500" y="1.500" width="25" height="10.500" rx="5.200" fill="none" stroke="#eee" stroke-width="2.200"/><circle cx="7" cy="6.700" r="3.600" fill="#eee"/><rect y="15" width="28" height="13" rx="6.500" fill="#eee"/><circle cx="21" cy="21.500" r="3.600" fill="#000"/></svg>
    <span>Mié may 7</span><span>16:39</span>
  </div>
</header>

<div class="behind"></div>

<main class="window">
  <div class="tabstrip">
    <div class="lights"><i class="red"></i><i class="amber"></i><i class="green"></i></div>
    <div class="tab"><svg><use href="#f-chrome"/></svg></div>
    <div class="tab"><svg><use href="#f-hand"/></svg></div>
    <div class="tab"><svg><use href="#f-yt"/></svg></div>
    <div class="tab"><svg><use href="#f-yt"/></svg></div>
    <div class="tab"><svg><use href="#f-globe"/></svg></div>
    <div class="tab"><svg><use href="#f-u"/></svg></div>
    <div class="tab"><svg><use href="#f-yt"/></svg></div>
    <div class="tab"><svg><use href="#f-v"/></svg></div>
    <div class="tab"><svg><use href="#f-p"/></svg></div>
    <div class="tab"><svg><use href="#f-cloud"/></svg></div>
    <div class="tab"><svg><use href="#f-hug"/></svg></div>
    <div class="tab"><svg><use href="#f-sheet"/></svg></div>
    <div class="tab"><svg><use href="#f-hand"/></svg></div>
    <div class="tab"><svg><use href="#f-canva"/></svg></div>
    <div class="tab"><svg><use href="#f-yt"/></svg></div>
    <div class="tab"><svg><use href="#f-l"/></svg></div>
    <div class="tab bare"><svg><use href="#f-replitdot"/></svg></div>
    <div class="active-tab"><svg viewBox="0 0 126 68"><path d="M0 68q20-2 24-24V22Q24 0 46 0h34q22 0 22 22v22q4 22 24 24z" fill="#fff"/><path d="m63.500 21.500 13 13m0-13-13 13" stroke="#1f1f1f" stroke-width="2.800"/></svg></div>
    <div class="tab"><svg><use href="#f-tap"/></svg></div>
    <div class="tab"><svg><use href="#f-cpp"/></svg></div>
    <div class="tab"><svg><use href="#f-cube"/></svg></div>
    <div class="tab"><svg><use href="#f-outlook"/></svg></div>
    <div class="tab"><svg><use href="#f-copilot"/></svg></div>
    <div class="tab"><svg><use href="#f-n"/></svg></div>
    <div class="tab"><svg><use href="#f-globe"/></svg></div>
    <div class="tab"><svg><use href="#f-ms"/></svg></div>
    <div class="tab"><svg><use href="#f-df"/></svg></div>
    <div class="tab"><svg><use href="#f-b"/></svg></div>
    <div class="tab"><svg><use href="#f-bot"/></svg></div>
    <div class="tab"><svg><use href="#f-bb"/></svg></div>
    <div class="tab"><svg><use href="#f-in"/></svg></div>
    <div class="tab"><svg><use href="#f-df"/></svg></div>
    <div class="tab"><svg><use href="#f-webex"/></svg></div>
    <svg class="plus" viewBox="0 0 20 20"><path d="M10 0v20M0 10h20" stroke="#1f1f1f" stroke-width="2.600"/></svg>
    <div class="chev"><svg viewBox="0 0 16 10"><path d="m1.500 1.500 6.500 6.500 6.500-6.500" fill="none" stroke="#1f1f1f" stroke-width="2.800"/></svg></div>
  </div>

  <div class="toolbar">
    <svg viewBox="0 0 24 24"><path d="M23 12H2M12 1.500 1.500 12 12 22.500" fill="none" stroke="#333" stroke-width="2.600"/></svg>
    <svg viewBox="0 0 24 24"><path d="M1 12h21M12 1.500 22.500 12 12 22.500" fill="none" stroke="#a4a4a4" stroke-width="2.600"/></svg>
    <svg viewBox="0 0 24 24"><path d="M22 12A10 10 0 1 1 19 5l3 3" fill="none" stroke="#333" stroke-width="2.800"/><path d="M23 0v9.500h-9.500V7H20V0z" fill="#333"/></svg>
    <div class="url">
      <span class="site"><svg viewBox="0 0 26 24"><circle cx="5.500" cy="5.500" r="3.500" fill="none" stroke="#333" stroke-width="2.600"/><circle cx="20.500" cy="18.500" r="3.500" fill="none" stroke="#333" stroke-width="2.600"/><path d="M13 5.500h11M2 18.500h11" stroke="#333" stroke-width="2.600"/></svg></span>
      <span class="addr">a6481a0e-1b17-48e5-925f-133729b45681-00-1ypwsu92tle9.worf.replit.dev<em>/#contacto</em></span>
      <svg class="star" viewBox="0 0 30 30"><path d="m15 2.500 3.500 8.700 9.300.7-7.100 6 2.300 9.100-8-5-8 5 2.300-9.100-7.100-6 9.300-.7z" fill="none" stroke="#5a5a5a" stroke-width="2.400"/></svg>
    </div>
    <svg class="puzzle" viewBox="0 0 34 34"><path d="M2 7h10V5q2-5 6 0v2h10v10h1q4 3 0 6h-1v9H2v-8q8-3 0-9z" fill="none" stroke="#333" stroke-width="3" stroke-linejoin="round"/></svg>
    <i class="tsep"></i>
    <svg class="avatar" viewBox="0 0 40 40"><clipPath id="cAv"><circle cx="20" cy="20" r="20"/></clipPath><g clip-path="url(#cAv)"><path d="M0 0h40v40H0z" fill="#999"/><path d="M0 0h13v40H0z" fill="#d0d0d0"/><path d="M13 6q10-8 20 2l1 6H15z" fill="#2a2a2a"/><path d="M16 12h17l-1 12-6 8h-4l-6-8z" fill="#dcdcdc"/><path d="M17 15h7v4h-7zM26 15h7v4h-7z" fill="#222"/><path d="M18 24q7 4 13 0l-4 8h-5z" fill="#555"/><path d="M4 40l4-9 12-1 8 10z" fill="#222"/><path d="M10 33l4 5M16 32l3 5M6 26l5 4" stroke="#eee" stroke-width="2"/></g></svg>
    <div class="update"><span>Finalizar actualización</span><svg viewBox="0 0 8 28"><circle cx="4" cy="3.200" r="3"/><circle cx="4" cy="14" r="3"/><circle cx="4" cy="24.800" r="3"/></svg></div>
  </div>

  <div class="bookmarks">
    <svg class="apps" viewBox="0 0 28 28"><path d="M1.500 1.500h9.500v9.500H1.500zM17 1.500h9.500v9.500H17zM1.500 17h9.500v9.500H1.500zM17 17h9.500v9.500H17z" fill="none" stroke="#222" stroke-width="3"/></svg>
    <i class="bsep"></i>
    <a><svg><use href="#f-df"/></svg>DF</a>
    <a><svg><use href="#f-in"/></svg>L</a>
    <a><svg><use href="#f-flame"/></svg>OB</a>
    <a><svg><use href="#f-drive"/></svg>Drive</a>
    <a><svg><use href="#f-photos"/></svg>Photos</a>
    <a><svg><use href="#f-feedly"/></svg>F</a>
    <a><svg><use href="#f-wn"/></svg>WN</a>
    <a><svg><use href="#f-yt"/></svg>YT</a>
    <a><svg><use href="#f-mit"/></svg>MIT</a>
    <a><svg><use href="#f-ad"/></svg>AD</a>
    <a><svg><use href="#f-g"/></svg>GAD</a>
    <a><svg><use href="#f-gpt"/></svg>GPT</a>
    <a><svg><use href="#f-ae"/></svg>AE</a>
    <a><svg><use href="#f-claude"/></svg>Claude</a>
    <a><svg><use href="#f-heygen"/></svg>HeyGen</a>
    <a><svg><use href="#f-bolt"/></svg>Bolt</a>
    <a><svg><use href="#f-gemini"/></svg>Gemini</a>
    <a><svg><use href="#f-replit"/></svg>Replit</a>
    <a><svg><use href="#f-grok"/></svg>Grok</a>
    <a><svg><use href="#f-nlm"/></svg>NotebookLM</a>
    <a><svg><use href="#f-cpp"/></svg>CPP</a>
    <a><svg><use href="#f-fm"/></svg>FM</a>
    <a><svg><use href="#f-v7"/></svg>V7 - Build Trustwo...</a>
    <svg class="more" viewBox="0 0 20 18"><path d="m2 2 7 7-7 7M11 2l7 7-7 7" fill="none" stroke="#333" stroke-width="2.600"/></svg>
  </div>

  <div class="viewport">
    <div class="site-page">
      <header class="site-head">
        <svg class="logo"><use href="#i-logo"/></svg>
        <strong class="brand">Global Bids</strong>
        <a><svg class="w36"><use href="#i-home"/></svg>Inicio</a>
        <a><svg class="w40"><use href="#i-users"/></svg>Nosotros</a>
        <a><svg><use href="#i-wrench"/></svg>Servicios</a>
        <a><svg><use href="#i-table"/></svg>Marketplace</a>
        <a><svg><use href="#i-gavel"/></svg>Subastas</a>
        <a><svg><use href="#i-headset"/></svg>Soporte</a>
        <a class="current"><svg><use href="#i-env"/></svg>Contacto</a>
        <i class="hsep"></i>
        <div class="lang"><span class="on"><svg><use href="#i-es"/></svg>ES</span><span><svg><use href="#i-en"/></svg>EN</span></div>
      </header>

      <section class="contact">
        <h1>Contáctanos</h1>
        <div class="rule"></div>
        <p class="lead">Estamos aquí para ayudarte</p>
        <div class="cols">
          <ul class="places">
            <li><svg class="pin"><use href="#i-pin"/></svg><div><h3>Centro Logístico</h3><p>La Negra, Antofagasta, Chile</p></div></li>
            <li><svg class="pin"><use href="#i-pin"/></svg><div><h3>Casa Matriz</h3><p>Luis Carrera 1263 oficina 301, Vitacura, Chile</p></div></li>
            <li><svg class="pin"><use href="#i-pin"/></svg><div><h3>Centro Operaciones Norte</h3><p>Sierra Gorda, Antofagasta, Chile</p></div></li>
            <li><svg class="pin"><use href="#i-pin"/></svg><div><h3>Oficina Massachusetts</h3><p>Dighton, Massachusetts, USA</p></div></li>
            <li><svg><use href="#i-tel"/></svg><div><h3>Teléfono</h3><p>+56 2 2756 9900</p></div></li>
            <li><svg><use href="#i-env"/></svg><div><h3>Email</h3><p>auctions@theglobalbid.com</p></div></li>
          </ul>
          <div class="form">
            <div class="field">Nombre</div>
            <div class="field"></div>
            <div class="field area"><svg viewBox="0 0 16 18"><path d="M1 17 15 2M9 17l6-7" stroke="#555" stroke-width="2"/></svg></div>
            <div class="send"><svg><use href="#i-plane"/></svg>Enviar mensaje</div>
          </div>
        </div>
      </section>

      <footer class="site-foot">
        <svg class="flogo"><use href="#i-logo"/></svg>
        <div class="fname"><strong>Global Bids</strong><span>Subastas de Maquinaria</span></div>
        <p>© 2025 Global Bids &nbsp;|&nbsp; Developed by <a>AIrontech</a></p>
      </footer>
    </div>
    <div class="overlay">
      <div class="modal">
        <div class="ok"><svg viewBox="0 0 54 42"><path d="m3 24 14 14L51 4" fill="none" stroke="#fff" stroke-width="5" stroke-linecap="round" stroke-linejoin="round"/></svg></div>
        <h2>Mensaje enviado</h2>
        <p>¡Gracias por contactarnos! Te responderemos pronto.</p>
        <button>Cerrar</button>
      </div>
    </div>
    <div class="fab wa"><svg><use href="#i-wa"/></svg></div>
    <div class="fab up"><svg viewBox="0 0 26 30"><path d="M13 28V3M2.500 13 13 2.500 23.500 13" fill="none" stroke="#141b2c" stroke-width="3.800" stroke-linecap="round" stroke-linejoin="round"/></svg></div>
    <div class="scroll"><i></i></div>
  </div>
</main>

<div class="dock">
  <div class="app run"><svg><use href="#d-finder"/></svg></div>
  <div class="app"><svg><use href="#d-launch"/></svg></div>
  <div class="app run"><svg><use href="#d-chrome"/></svg></div>
  <div class="app"><svg><use href="#d-safari"/></svg></div>
  <div class="app run"><svg><use href="#d-mail"/></svg><b class="badge wide">5,775</b></div>
  <div class="app run"><svg><use href="#d-cal"/></svg></div>
  <div class="app run"><svg><use href="#d-notes"/></svg></div>
  <div class="app run"><svg><use href="#d-key"/></svg></div>
  <div class="app"><svg><use href="#d-gear"/></svg><b class="badge">1</b></div>
  <div class="app run"><svg><use href="#d-spotify"/></svg></div>
  <div class="app run"><svg><use href="#d-outlook"/></svg></div>
  <div class="app run"><svg><use href="#d-excel"/></svg></div>
  <div class="app run"><svg><use href="#d-wa"/></svg></div>
  <div class="app run"><svg><use href="#d-word"/></svg></div>
  <div class="app run nudge"><svg><use href="#d-seven"/></svg></div>
  <div class="app big"><svg><use href="#d-ring"/></svg></div>
  <div class="app nudge"><svg><use href="#d-phone"/></svg></div>
  <div class="app nudge"><svg><use href="#d-replit"/></svg></div>
  <i class="dsep"></i>
  <div class="app run"><svg><use href="#d-acro"/></svg></div>
  <div class="app run"><svg><use href="#d-preview"/></svg></div>
  <div class="app run"><svg><use href="#d-ppt"/></svg></div>
  <div class="app run"><svg><use href="#d-code"/></svg></div>
  <div class="app run tall"><svg><use href="#d-text"/></svg></div>
  <div class="app run"><svg><use href="#d-webex"/></svg></div>
  <i class="dsep"></i>
  <div class="app doc"><svg><use href="#d-pdf"/></svg></div>
  <div class="app mini"><svg viewBox="0 0 84 76"><use href="#d-preview" x="55" y="49" width="26" height="27"/></svg></div>
  <div class="app mini"><svg viewBox="0 0 84 76"><rect y="12" width="83" height="48" fill="#dcdcdc"/><rect x="7" y="20" width="62" height="34" fill="#fff"/><path d="M9 22.500h41" stroke="#e8843c" stroke-width="2.600"/><circle cx="66" cy="22.500" r="2.300" fill="#54452a"/><path d="M10 28h22M44 28h22M12 33h12M12 37h10M12 41h12M12 45h10M47 33h9M47 37h8M47 41h9M26 52h22" stroke="#9a9a9a" stroke-width="1.400"/><rect x="28" y="33" width="18" height="12" fill="#1c1c1c"/><use href="#d-key" x="55" y="49" width="26" height="26"/></svg></div>
  <div class="app mini"><svg viewBox="0 0 84 76"><use href="#d-key" x="55" y="49" width="26" height="26"/></svg></div>
  <div class="app mini"><svg viewBox="0 0 84 76"><rect y="11" width="83" height="50" fill="#e8edf2"/><path d="M0 11h83v7H0z" fill="#f8f8f8"/><path d="M26 18h31v43H26z" fill="#fff"/><path d="M26 23h31v6H26z" fill="#3d4c94"/><path d="M35 20.500h12" stroke="#3f6cae" stroke-width="2"/><path d="M30 31h22" stroke="#63b06c" stroke-width="1.500"/><path d="M32 40h12M32 44h14M32 48h10M34 35h16" stroke="#aaa" stroke-width="1.300"/><path d="M36 51.500h11" stroke="#3f66e0" stroke-width="2.400"/><path d="M26 57h31v3H26z" fill="#dbe98c"/><use href="#d-mail" x="55" y="49" width="26" height="26"/></svg></div>
  <div class="app mini"><svg viewBox="0 0 84 76"><rect y="11" width="83" height="50" fill="#e6e6e6"/><path d="M0 11h83v2.500H0z" fill="#4a7ad0"/><path d="M20 19h43v42H20z" fill="#fff"/><path d="M25 20h33v17H25z" fill="#0d1630"/><rect x="42" y="22" width="12" height="12" fill="#fff"/><path d="M42 32h12" stroke="#f0c844" stroke-width="1.500"/><path d="M27 23h8M27 26h6M27 29h8M27 32h6" stroke="#888" stroke-width="1"/><use href="#d-word" x="55" y="49" width="26" height="26"/></svg></div>
  <div class="app mini"><svg viewBox="0 0 84 76"><rect y="11" width="83" height="50" fill="#0c0c0c"/><path d="M27 21h13v14H27z" fill="#702c38"/><path d="M43 20h13v14H43z" fill="#c85ca0"/><path d="M59 18h23v24H59z" fill="#4c2a24"/><path d="M64 20h10v22H64z" fill="#111"/><path d="M27 39h14v15H27z" fill="#2c7c9c"/><path d="M43 39h13v14H43z" fill="#dfe4f0" stroke="#3c66b4" stroke-width="1.500"/><path d="M46 43l3 3 4-3" stroke="#d03030" stroke-width="3" fill="none"/><path d="M3 20h5M3 25h3M3 29h3M3 36h3M3 42h3M3 48h3M3 54h3" stroke="#b58ad0" stroke-width="2.600"/><path d="M8 25h8M8 29h7M8 36h8M8 42h7M8 48h11" stroke="#777" stroke-width="1.300"/><use href="#d-spotify" x="54" y="49" width="27" height="27"/></svg></div>
  <div class="app mini"><svg viewBox="0 0 84 76"><rect y="12" width="83" height="48" fill="#fbfbfb"/><path d="M0 17h83" stroke="#a9c9ec" stroke-width="1.500"/><path d="M14 18h10v40H14z" fill="#eee"/><path d="M27 20v30" stroke="#e07878"/><path d="M33 21h8v5h-8z" fill="#ccc"/><path d="M59 21h4v7h-4z" fill="#3558a8"/><path d="M63 21h4v7h-4z" fill="#d04048"/><path d="M40 38h20M33 43h12M33 46h24M33 50h26M33 53h20M3 24h6M3 28h8M3 32h6M3 36h8" stroke="#aaa" stroke-width="1.200"/><path d="M4 57h6" stroke="#3f6ce0" stroke-width="2.400"/><use href="#d-acro" x="54" y="49" width="27" height="27"/></svg></div>
  <div class="app bin"><svg><use href="#d-trash"/></svg></div>
</div>
</body>
</html>
```
FILE: styles.css
```css
* { box-sizing: border-box; margin: 0; padding: 0; }

body {
  position: relative;
  width: 3420px;
  height: 2214px;
  overflow: hidden;
  background: #000;
  font-family: Inter, "Noto Sans", sans-serif;
}

i, em { font-style: normal; }
.sprite { position: absolute; }
svg { display: block; flex: none; overflow: visible; }

/* menu bar */
.menubar { display: flex; justify-content: space-between; height: 74px; color: #fff; font-size: 25px; letter-spacing: .1px; white-space: nowrap; }
.menus { display: grid; grid-template-columns: 72px 143px 132px 129px 198px 140px 151px 130px 140px 140px 100px; align-items: center; padding-left: 36px; }
.menus b { font-weight: 700; letter-spacing: .8px; }
.apple { width: 34px; height: 32px; }
.status { display: grid; grid-template-columns: 66px 64px 66px 66px 80px 61px 68px 66px 89px 74px 66px 65px 141px 102px; align-items: center; color: #eee; font-size: 26px; }
.status small { font-size: 22px; letter-spacing: -.3px; }

/* browser window */
.behind { position: absolute; left: 0; top: 98px; width: 3420px; height: 1938px; border-radius: 24px; background: #c9c9c9; }
.window { position: absolute; left: 16px; top: 94px; width: 3388px; height: 1974px; border-radius: 22px; overflow: hidden; background: #d2e8c2; }

.tabstrip { display: flex; align-items: center; height: 80px; }
.lights { display: flex; gap: 16px; width: 180px; padding-left: 42px; }
.lights i { width: 24px; height: 24px; border-radius: 50%; }
.red { background: #ec6a5e; }
.amber { background: #f4bf4f; }
.green { background: #61c554; }
.tab { display: flex; align-items: center; width: 90px; height: 32px; padding-left: 22px; border-right: 4px solid #fff; }
.tab:nth-child(2) { padding-left: 20px; }
.tab svg { width: 32px; height: 32px; }
.tab.bare { border: 0; }
.active-tab { width: 90px; height: 68px; align-self: flex-end; }
.active-tab svg { width: 126px; height: 68px; margin-left: -18px; }
.plus { width: 20px; height: 20px; margin-left: 24px; }
.chev { display: flex; align-items: center; justify-content: center; width: 56px; height: 56px; margin: 0 12px 0 auto; border-radius: 20px; background: #fff; }
.chev svg { width: 16px; height: 10px; }

.toolbar { display: flex; align-items: center; height: 92px; padding: 0 12px 0 32px; border-radius: 16px 16px 0 0; background: #fff; }
.toolbar > svg { width: 24px; height: 24px; margin-right: 48px; }
.url { display: flex; align-items: center; width: 2580px; height: 68px; margin-left: -8px; padding: 0 33px 0 10px; border-radius: 34px; background: #e0e0e0; }
.site { display: flex; align-items: center; justify-content: center; width: 48px; height: 48px; border-radius: 50%; background: #fff; }
.site svg { width: 26px; height: 24px; }
.addr { margin-left: 16px; font-size: 28px; letter-spacing: .28px; color: #202124; }
.addr em { color: #5f6368; }
.star { width: 30px; height: 30px; margin-left: auto; }
.toolbar > .puzzle { width: 34px; height: 34px; margin: 0 32px 0 38px; }
.tsep { width: 4px; height: 32px; background: #d2e8c2; }
.toolbar > .avatar { width: 40px; height: 40px; margin: 0 24px 0 32px; }
.update { display: flex; align-items: center; justify-content: space-between; width: 352px; height: 68px; padding: 0 28px 0 24px; border-radius: 34px; background: #d2e8c2; color: #202124; font-size: 26px; letter-spacing: -.08px; white-space: nowrap; }
.update svg { width: 8px; height: 28px; }

.bookmarks {
  display: grid;
  grid-template-columns: 58px 32px 108px 90px 112px 136px 156px 90px 118px 108px 120px 110px 128px 126px 108px 156px 166px 122px 156px 142px 130px 222px 124px 112px 334px 30px;
  align-items: center;
  height: 70px;
  padding: 0 0 12px 38px;
  border-bottom: 2px solid #c8c8c8;
  background: #fff;
  color: #202124;
  font-size: 23.5px;
  white-space: nowrap;
}
.bookmarks a { display: flex; align-items: center; gap: 12px; }
.bookmarks a svg { width: 32px; height: 32px; }
.apps { width: 28px; height: 28px; }
.bsep { width: 4px; height: 32px; background: #d2e8c2; }
.more { width: 20px; height: 18px; margin-left: 4px; }

/* site */
.viewport { position: relative; height: 1732px; background: #0f1525; color: #fff; }
.site-page { width: 3372px; height: 1732px; font-size: 31px; }
.site-head {
  display: grid;
  grid-template-columns: 136px 748px 210px 272px 264px 311px 266px 215px 289px 17px 280px;
  align-items: center;
  height: 144px;
  padding-left: 182px;
  color: #d1d5db;
  font-size: 31px;
  font-weight: 500;
}
.logo { width: 112px; height: 112px; }
.brand { color: #fff; font-size: 46px; font-weight: 800; letter-spacing: .2px; font-feature-settings: "cv11"; }
.site-head a { display: flex; align-items: center; gap: 15px; fill: currentColor; letter-spacing: -.1px; }
.site-head a svg { width: 33px; height: 32px; }
.site-head a svg.w36 { width: 37px; }
.site-head a svg.w40 { width: 41px; }
.site-head .current { width: 248px; height: 80px; padding-left: 31px; border-radius: 12px; background: #fff; color: #0f1525; }
.hsep { width: 2px; height: 80px; background: #2a3040; }
.lang { display: flex; align-items: center; width: 280px; height: 80px; padding: 8px; border-radius: 40px; background: #eff3f1; color: #8b929c; font-size: 26px; }
.lang span { display: flex; align-items: center; gap: 10px; height: 64px; padding: 0 24px; border-radius: 32px; }
.lang svg { width: 40px; height: 30px; }
.lang .on { width: 131px; background: #0f1525; color: #d1d5db; }

.contact { padding: 25px 182px 128px; }
h1 { height: 80px; line-height: 80px; text-align: center; font-size: 72px; font-weight: 800; letter-spacing: 1.2px; font-feature-settings: "cv11"; }
.rule { width: 160px; height: 8px; margin: 33px auto 49px; background: #f3ce49; }
.lead { line-height: 50px; margin-bottom: -2px; text-align: center; letter-spacing: -.15px; color: #d1d5db; }
.cols { display: grid; grid-template-columns: 1456px 1456px; gap: 96px; margin-top: 95px; }
.places { display: flex; flex-direction: column; gap: 64px; list-style: none; }
.places li { display: flex; align-items: flex-start; gap: 33px; height: 104px; fill: #f3ce49; }
.places svg { width: 40px; height: 40px; margin-top: 16px; }
.places .pin { width: 30px; margin-right: -1px; }
.places svg:not(.pin) { margin-right: -1px; }
.places h3 { line-height: 56px; font-size: 35px; font-weight: 500; letter-spacing: -.34px; }
.places p { line-height: 51px; letter-spacing: -.18px; color: #d1d5db; }
.form { display: flex; flex-direction: column; height: 944px; padding: 48px; border-radius: 16px; background: #fff; }
.field { position: relative; height: 116px; margin-bottom: 32px; padding: 0 32px; border: 2px solid #d1d5db; border-radius: 16px; line-height: 115px; color: #9ca3af; }
.area { height: 308px; margin-bottom: 44px; }
.area svg { position: absolute; right: 0; bottom: 2px; width: 16px; height: 18px; }
.send { display: flex; align-items: center; justify-content: center; gap: 15px; height: 112px; border-radius: 16px; background: #f3ce49; box-shadow: 0 0 0 2px #2250b0, inset 0 0 0 2px #2250b0; color: #0f1525; font-weight: 500; letter-spacing: .1px; }
.send svg { width: 33px; height: 32px; fill: #0f1525; }

.site-foot { display: flex; align-items: center; height: 178px; padding: 0 182px; border-top: 2px solid #232a3a; }
.flogo { width: 80px; height: 80px; }
.fname { display: flex; flex-direction: column; margin: 2px 0 0 25px; }
.fname strong { line-height: 44px; font-size: 31px; font-weight: 600; letter-spacing: .4px; }
.fname span { line-height: 35px; font-size: 23.5px; letter-spacing: .08px; color: #9ca3af; }
.site-foot p { margin-left: auto; font-size: 28px; letter-spacing: -.4px; color: #9ca3af; }
.site-foot a { color: #5f8cdc; }

.overlay { position: absolute; left: 0; top: 0; display: flex; align-items: center; justify-content: center; width: 3372px; height: 1732px; background: rgba(0, 0, 0, .7); }
.modal { display: flex; flex-direction: column; align-items: center; width: 896px; height: 536px; padding: 48px; border: 4px solid #f3ce49; border-radius: 16px; background: #fff; box-shadow: 0 24px 48px rgba(0, 0, 0, .3); color: #1f2937; }
.ok { display: flex; align-items: center; justify-content: center; width: 128px; height: 128px; border-radius: 50%; background: #f3ce49; }
.ok svg { width: 54px; height: 42px; }
.modal h2 { margin-top: 34px; line-height: 64px; font-size: 46px; font-weight: 700; letter-spacing: -.5px; }
.modal p { margin: 15px 0 47px; line-height: 48px; font-size: 31px; letter-spacing: -.21px; white-space: nowrap; }
.modal button { width: 792px; height: 96px; border: 0; border-radius: 16px; background: #f3ce49; color: #111827; font: 600 31px Inter, sans-serif; }

.fab { position: absolute; right: 56px; display: flex; align-items: center; justify-content: center; border-radius: 42px; }
.wa { top: 1468px; width: 83px; height: 104px; background: #5bc568; }
.wa svg { width: 36px; height: 41px; }
.up { top: 1596px; width: 72px; height: 96px; background: #f3ce49; }
.up svg { width: 26px; height: 30px; }
.scroll { position: absolute; right: 0; top: 0; width: 16px; height: 1732px; background: #f1f1f1; }
.scroll i { display: block; height: 144px; border-radius: 8px 8px 0 0; background: #888; transform: translateY(1588px); }

/* dock */
.dock { position: absolute; left: 78px; top: 2086px; display: flex; width: 3262px; height: 118px; padding-left: 4px; border: 2px solid #6d6d6d; border-radius: 38px; background: #535353; }
.app { position: relative; display: flex; flex-direction: column; align-items: center; width: 96px; padding-top: 16px; }
.app svg { width: 72px; height: 72px; }
.app.nudge svg { margin-left: -3px; }
.app.run::after { content: ""; width: 8px; height: 9px; margin-top: 15px; border-radius: 50%; background: #000; }
.app.big svg { width: 82px; height: 82px; margin: -8px 0 0 -3px; }
.app.tall svg { width: 76px; height: 80px; margin-top: -8px; }
.app.doc svg { width: 62px; height: 80px; margin-top: -3px; }
.app.mini svg { width: 84px; height: 76px; }
.app.bin svg { width: 64px; height: 84px; margin-top: -7px; }
.badge { position: absolute; right: 2px; top: 8px; width: 34px; height: 34px; border-radius: 17px; background: #e14e40; color: #fff; font-size: 20px; font-weight: 400; line-height: 34px; text-align: center; }
.badge.wide { right: -3px; width: 55px; font-size: 18px; }
.dsep { width: 2px; height: 86px; margin: 14px 20px 0; background: #222; }
```
